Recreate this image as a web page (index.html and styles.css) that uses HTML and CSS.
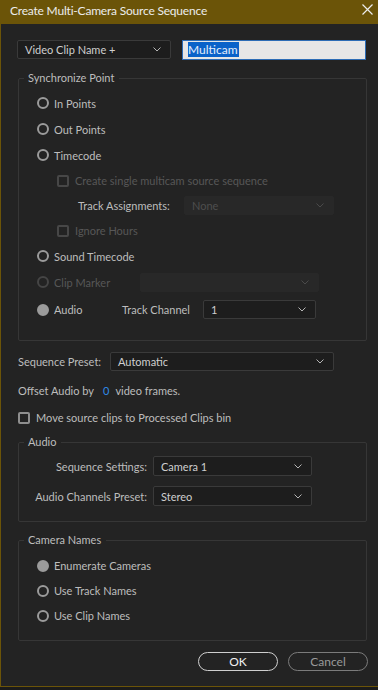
FILE: index.html
```html
<!DOCTYPE html>
<html lang="en">
<head>
<meta charset="UTF-8">
<meta name="viewport" content="width=device-width, initial-scale=1.0">
<title>Create Multi-Camera Source Sequence</title>
<link rel="stylesheet" href="styles.css">
</head>
<body>
<div class="dialog">
    <div class="titlebar">
        <span class="title">Create Multi-Camera Source Sequence</span>
        <svg class="close" width="11" height="11" viewBox="0 0 11 11"><path d="M0.5 0.5 L10.5 10.5 M10.5 0.5 L0.5 10.5" stroke="#ececec" stroke-width="1.2" fill="none"/></svg>
    </div>

    <div class="content">
        <div class="top-row">
            <div class="select name-select">
                <span>Video Clip Name +</span>
                <svg class="chev" width="8" height="5" viewBox="0 0 8 5"><polyline points="0.5,0.5 4,4 7.5,0.5" fill="none" stroke="#b5b5b5" stroke-width="1"/></svg>
            </div>
            <div class="text-input"><span class="selected">Multicam</span></div>
        </div>

        <fieldset class="group sync">
            <legend>Synchronize Point</legend>
            <div class="row"><span class="radio"></span><span class="label">In Points</span></div>
            <div class="row"><span class="radio"></span><span class="label">Out Points</span></div>
            <div class="row"><span class="radio"></span><span class="label">Timecode</span></div>
            <div class="row sub"><span class="check disabled"></span><span class="label disabled">Create single multicam source sequence</span></div>
            <div class="row sub">
                <span class="label track-label">Track Assignments:</span>
                <div class="select disabled track-select">
                    <span>None</span>
                    <svg class="chev" width="8" height="5" viewBox="0 0 8 5"><polyline points="0.5,0.5 4,4 7.5,0.5" fill="none" stroke="#4a4a4a" stroke-width="1"/></svg>
                </div>
            </div>
            <div class="row sub"><span class="check disabled"></span><span class="label disabled">Ignore Hours</span></div>
            <div class="row"><span class="radio"></span><span class="label">Sound Timecode</span></div>
            <div class="row">
                <span class="radio disabled"></span><span class="label disabled marker-label">Clip Marker</span>
                <div class="select disabled marker-select">
                    <span></span>
                    <svg class="chev" width="8" height="5" viewBox="0 0 8 5"><polyline points="0.5,0.5 4,4 7.5,0.5" fill="none" stroke="#4a4a4a" stroke-width="1"/></svg>
                </div>
            </div>
            <div class="row audio-row">
                <span class="radio filled"></span><span class="label audio-label">Audio</span>
                <span class="label channel-label">Track Channel</span>
                <div class="select channel-select">
                    <span>1</span>
                    <svg class="chev" width="8" height="5" viewBox="0 0 8 5"><polyline points="0.5,0.5 4,4 7.5,0.5" fill="none" stroke="#b5b5b5" stroke-width="1"/></svg>
                </div>
            </div>
        </fieldset>

        <div class="line preset-line">
            <span class="label preset-label">Sequence Preset:</span>
            <div class="select preset-select">
                <span>Automatic</span>
                <svg class="chev" width="8" height="5" viewBox="0 0 8 5"><polyline points="0.5,0.5 4,4 7.5,0.5" fill="none" stroke="#b5b5b5" stroke-width="1"/></svg>
            </div>
        </div>

        <div class="line offset-line">
            <span class="label">Offset Audio by</span>
            <span class="value">0</span>
            <span class="label">video frames.</span>
        </div>

        <div class="line move-line">
            <span class="check"></span><span class="label">Move source clips to Processed Clips bin</span>
        </div>

        <fieldset class="group audio">
            <legend>Audio</legend>
            <div class="form-row">
                <span class="label">Sequence Settings:</span>
                <div class="select wide-select">
                    <span>Camera 1</span>
                    <svg class="chev" width="8" height="5" viewBox="0 0 8 5"><polyline points="0.5,0.5 4,4 7.5,0.5" fill="none" stroke="#b5b5b5" stroke-width="1"/></svg>
                </div>
            </div>
            <div class="form-row">
                <span class="label">Audio Channels Preset:</span>
                <div class="select wide-select">
                    <span>Stereo</span>
                    <svg class="chev" width="8" height="5" viewBox="0 0 8 5"><polyline points="0.5,0.5 4,4 7.5,0.5" fill="none" stroke="#b5b5b5" stroke-width="1"/></svg>
                </div>
            </div>
        </fieldset>

        <fieldset class="group cameras">
            <legend>Camera Names</legend>
            <div class="row"><span class="radio filled"></span><span class="label">Enumerate Cameras</span></div>
            <div class="row"><span class="radio"></span><span class="label">Use Track Names</span></div>
            <div class="row"><span class="radio"></span><span class="label">Use Clip Names</span></div>
        </fieldset>

        <div class="buttons">
            <button class="btn btn-ok">OK</button>
            <button class="btn btn-cancel">Cancel</button>
        </div>
    </div>
</div>
</body>
</html>
```

FILE: styles.css
```css
html, body {
    margin: 0;
    padding: 0;
    background-color: #1b1b1b;
}
body {
    font-family: Lato, "Open Sans", sans-serif;
    font-size: 11px;
    color: #bdbdbd;
    width: 378px;
    height: 690px;
    overflow: hidden;
}
.dialog {
    height: 686px;
    background-color: #232323;
    border-left: 1px solid #6b5408;
    border-bottom: 1px solid #6b5408;
}
.titlebar {
    height: 24px;
    background-color: #6b5408;
    display: flex;
    align-items: center;
    justify-content: space-between;
    padding: 0 5px 0 9px;
}
.title {
    color: #ececec;
    font-size: 12px;
    letter-spacing: -0.2px;
    margin-top: -4px;
}
.close {
    margin-top: -5px;
}
.content {
    padding: 16px 12px 0 16px;
}
.top-row {
    display: flex;
    height: 19px;
    margin-bottom: 12px;
}
.select {
    box-sizing: border-box;
    height: 19px;
    display: flex;
    align-items: center;
    justify-content: space-between;
    padding: 0 9px 0 7px;
    background-color: #1d1d1d;
    border: 1px solid #3a3a3a;
    border-radius: 2px;
    color: #cfcfcf;
}
.select.disabled {
    background-color: #282828;
    border-color: #282828;
    color: #4e4e4e;
}
.name-select {
    width: 154px;
}
.text-input {
    box-sizing: border-box;
    width: 184px;
    height: 20px;
    margin-left: 11px;
    background-color: #e6e6e6;
    border: 1px solid #2c6cb5;
    padding: 1px 0 0 5px;
}
.selected {
    background-color: #0a62c9;
    color: #e4eefc;
    font-size: 12px;
    line-height: 15px;
    display: inline-block;
    padding-right: 1px;
}
.group {
    margin: 0 0 0 1px;
    padding: 5px 0 0 0;
    width: 349px;
    box-sizing: border-box;
    border: 1px solid #363636;
    border-radius: 2px;
}
.group legend {
    margin-left: 5px;
    padding: 0 5px 0 4px;
    line-height: 14px;
    color: #bdbdbd;
}
.sync {
    height: 270px;
}
.row {
    height: 26px;
    display: flex;
    align-items: center;
    padding-left: 18px;
}
.sync .row.sub {
    height: 25px;
    padding-left: 38px;
}
.sync .audio-row {
    height: 29px;
}
.radio {
    box-sizing: border-box;
    width: 12px;
    height: 12px;
    border: 2px solid #9b9b9b;
    border-radius: 50%;
    margin-right: 5px;
    flex-shrink: 0;
}
.radio.filled {
    background-color: #9b9b9b;
}
.radio.disabled {
    border-color: #454545;
}
.check {
    box-sizing: border-box;
    width: 12px;
    height: 12px;
    border: 2px solid #8e8e8e;
    border-radius: 2px;
    margin-right: 6px;
    flex-shrink: 0;
}
.check.disabled {
    border-color: #474747;
}
.label.disabled {
    color: #575757;
}
.track-label {
    margin-left: 21px;
    width: 106px;
    color: #bdbdbd;
}
.track-select {
    width: 150px;
}
.marker-label {
    width: 86px;
}
.marker-select {
    width: 179px;
}
.audio-label {
    width: 68px;
}
.channel-label {
    width: 81px;
}
.channel-select {
    width: 113px;
}
.line {
    display: flex;
    align-items: center;
    margin-left: 1px;
}
.preset-line {
    margin-top: 11px;
    height: 19px;
}
.preset-label {
    width: 92px;
}
.preset-select {
    width: 224px;
}
.offset-line {
    margin-top: 10px;
    height: 19px;
}
.value {
    color: #2f8ae8;
    margin: 0 6px 0 9px;
}
.move-line {
    margin-top: 8px;
    height: 19px;
    margin-bottom: 8px;
}
.audio {
    height: 87px;
    padding-top: 2px;
}
.form-row {
    display: flex;
    align-items: center;
    height: 30px;
}
.form-row .label {
    width: 128px;
    text-align: right;
    margin-right: 6px;
}
.wide-select {
    width: 159px;
    height: 20px;
}
.cameras {
    margin-top: 11px;
    height: 108px;
    padding-top: 6px;
}
.cameras .row {
    height: 25px;
}
.buttons {
    display: flex;
    justify-content: flex-end;
    gap: 10px;
    margin-top: 11px;
    width: 351px;
}
.btn {
    box-sizing: border-box;
    width: 80px;
    height: 19px;
    border-radius: 10px;
    background: transparent;
    font-family: Lato, "Open Sans", sans-serif;
    font-size: 12px;
    padding: 0;
    cursor: pointer;
}
.btn-ok {
    border: 1px solid #cfcfcf;
    color: #f0f0f0;
}
.btn-cancel {
    border: 1px solid #7b7b7b;
    color: #9a9a9a;
}
```
